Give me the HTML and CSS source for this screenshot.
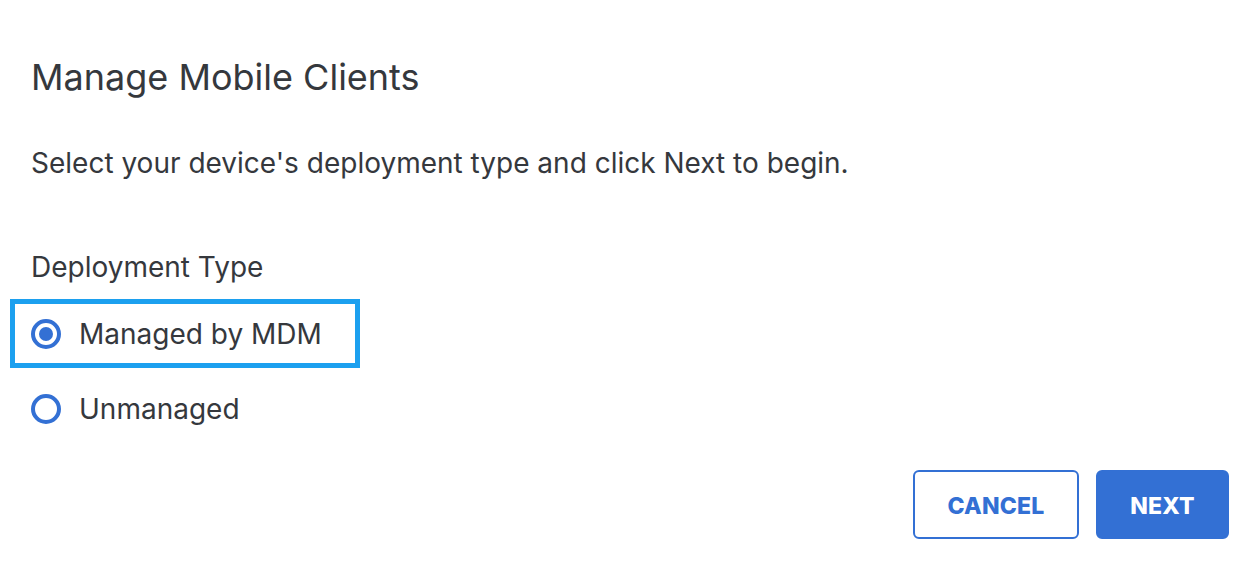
FILE: index.html
```html
<!DOCTYPE html>
<html lang="en">
<head>
<meta charset="utf-8">
<title>Manage Mobile Clients</title>
<link rel="stylesheet" href="styles.css">
</head>
<body>
<main class="dialog">
  <h1 class="title">Manage Mobile Clients</h1>
  <p class="intro">Select your device's deployment type and click Next to begin.</p>
  <div class="field">
    <div class="field-label">Deployment Type</div>
    <div class="options">
      <label class="option focused">
        <span class="radio checked"><span class="dot"></span></span>
        <span class="option-text">Managed by MDM</span>
      </label>
      <label class="option">
        <span class="radio"></span>
        <span class="option-text">Unmanaged</span>
      </label>
    </div>
  </div>
  <div class="actions">
    <button class="btn btn-secondary" type="button">CANCEL</button>
    <button class="btn btn-primary" type="button">NEXT</button>
  </div>
</main>
</body>
</html>
```

FILE: styles.css
```css
* { box-sizing: border-box; }
html, body { margin: 0; padding: 0; background: #ffffff; }
body {
  font-family: Inter, "Noto Sans", "Liberation Sans", sans-serif;
  color: #35383d;
  width: 1258px;
  height: 570px;
  overflow: hidden;
}
.dialog {
  padding: 55px 29px 0 10px;
}
.title {
  margin: 0 0 0 21px;
  font-size: 36px;
  line-height: 44px;
  font-weight: 400;
}
.intro {
  margin: 46px 0 0 21px;
  font-size: 28px;
  line-height: 36px;
}
.field { margin-top: 68px; }
.field-label {
  margin-left: 21px;
  font-size: 28px;
  line-height: 36px;
}
.options {
  margin-top: 14px;
  display: flex;
  flex-direction: column;
  gap: 6px;
}
.option {
  display: flex;
  align-items: center;
  width: 350px;
  height: 69px;
  border: 5px solid transparent;
  padding-left: 16px;
  gap: 18px;
  font-size: 28px;
  line-height: 36px;
}
.option.focused { border-color: #1ca0ef; }
.radio {
  width: 30px;
  height: 30px;
  border: 4px solid #3370d4;
  border-radius: 50%;
  display: flex;
  align-items: center;
  justify-content: center;
  flex: none;
}
.dot {
  width: 14px;
  height: 14px;
  border-radius: 50%;
  background: #3370d4;
}
.actions {
  margin-top: 27px;
  display: flex;
  justify-content: flex-end;
  gap: 17px;
}
.btn {
  height: 69px;
  padding: 3px 0 0;
  border-radius: 6px;
  font-family: Inter, "Noto Sans", "Liberation Sans", sans-serif;
  font-size: 23px;
  font-weight: 800;
  letter-spacing: 0.2px;
  cursor: pointer;
}
.btn-secondary {
  width: 166px;
  background: #ffffff;
  color: #3370d4;
  border: 2px solid #3370d4;
}
.btn-primary {
  width: 133px;
  background: #3370d4;
  color: #ffffff;
  border: 2px solid #3370d4;
}
```
